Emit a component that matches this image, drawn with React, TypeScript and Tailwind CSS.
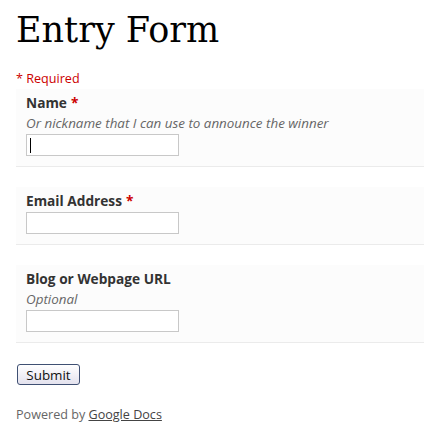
import React from "react";

const fields = [
  { label: "Name", required: true, help: "Or nickname that I can use to announce the winner", focus: true },
  { label: "Email Address", required: true, help: "", focus: false },
  { label: "Blog or Webpage URL", required: false, help: "Optional", focus: false },
];

export default function App() {
  return (
    <div className="min-h-[436px] w-[424px] bg-white pl-4 pt-[8px] font-['Open_Sans',sans-serif] text-[#333]">
      <h1 className="font-['DejaVu_Serif',serif] text-[35px] leading-[44px] text-black">Entry Form</h1>

      <div className="mt-[19px] text-[12.6px] leading-[16px] text-[#cc0000]">* Required</div>

      <div className="mt-[2px] flex flex-col">
        {fields.map((f, i) => (
          <div
            key={f.label}
            className={`border-b border-[#ebebeb] bg-[#fcfcfc] px-[10px] pt-[5px] pb-[10px] ${i > 0 ? "mt-[20px]" : ""}`}
          >
            <div className="text-[13.7px] font-bold leading-[18px] text-[#333]">
              {f.label}
              {f.required && <span className="ml-[4px] text-[#cc0000]">*</span>}
            </div>
            {f.help && (
              <div className="mt-[3px] text-[13.4px] italic leading-[17px] text-[#666]">{f.help}</div>
            )}
            <div className="mt-[2px] flex h-[22px] w-[153px] items-center border border-[#c8c8c8] bg-white px-[3px]">
              {f.focus && <div className="h-[15px] w-px bg-black" />}
            </div>
          </div>
        ))}
      </div>

      <button className="ml-px mt-[21px] h-[21px] w-[63px] rounded-[3px] border border-[#3f5073] bg-gradient-to-b from-white to-[#e4e2ee] text-[13.4px] leading-[18px] text-[#111]">
        Submit
      </button>

      <div className="mt-[21px] text-[12.6px] leading-[16px] text-[#666]">
        Powered by <span className="text-[#444] underline">Google Docs</span>
      </div>
    </div>
  );
}
